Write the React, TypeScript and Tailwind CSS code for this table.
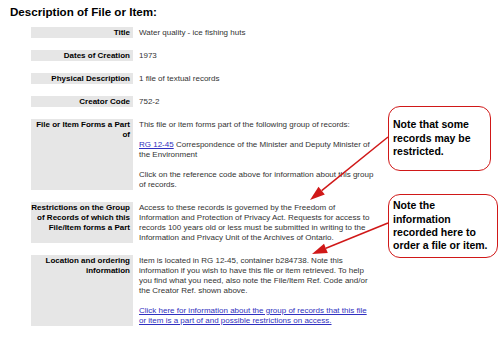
import React from "react";

const Line = ({ children }: { children: React.ReactNode }) => (
  <span className="block whitespace-nowrap">{children}</span>
);

const Label = ({ lines }: { lines: string[] }) => (
  <div className="bg-[#e6e6e6] py-[0.5px] pr-[3px] text-right font-bold text-black">
    {lines.map((l) => (
      <Line key={l}>{l}</Line>
    ))}
  </div>
);

const Link = ({ children }: { children: React.ReactNode }) => (
  <span className="text-[#3030c0] underline">{children}</span>
);

export default function App() {
  return (
    <div className="relative w-[503px] h-[337px] overflow-hidden bg-white font-['Liberation_Sans',Arial,sans-serif]">
      <div className="pl-[10px] pt-[5px]">
        <h1 className="text-[11.6px] leading-[14px] font-bold text-black">
          Description of File or Item:
        </h1>
      </div>
      <div className="ml-[31px] mt-[8px] grid grid-cols-[102px_236px] gap-x-[6px] gap-y-[12px] text-[8px] leading-[10px] text-[#333]">
        <Label lines={["Title"]} />
        <div className="py-[0.5px]">
          <Line>Water quality - ice fishing huts</Line>
        </div>

        <Label lines={["Dates of Creation"]} />
        <div className="py-[0.5px]">
          <Line>1973</Line>
        </div>

        <Label lines={["Physical Description"]} />
        <div className="py-[0.5px]">
          <Line>1 file of textual records</Line>
        </div>

        <Label lines={["Creator Code"]} />
        <div className="py-[0.5px]">
          <Line>752-2</Line>
        </div>

        <Label lines={["File or Item Forms a Part", "of"]} />
        <div className="py-[0.5px] flex flex-col gap-[10px]">
          <div>
            <Line>This file or item forms part of the following group of records:</Line>
          </div>
          <div>
            <Line>
              <Link>RG 12-45</Link> Correspondence of the Minister and Deputy Minister of
            </Line>
            <Line>the Environment</Line>
          </div>
          <div>
            <Line>Click on the reference code above for information about this group</Line>
            <Line>of records.</Line>
          </div>
        </div>

        <Label
          lines={[
            "Restrictions on the Group",
            "of Records of which this",
            "File/Item forms a Part",
          ]}
        />
        <div className="py-[0.5px]">
          <Line>Access to these records is governed by the Freedom of</Line>
          <Line>Information and Protection of Privacy Act. Requests for access to</Line>
          <Line>records 100 years old or less must be submitted in writing to the</Line>
          <Line>Information and Privacy Unit of the Archives of Ontario.</Line>
        </div>

        <Label lines={["Location and ordering", "information"]} />
        <div className="py-[0.5px] flex flex-col gap-[10px]">
          <div>
            <Line>Item is located in RG 12-45, container b284738. Note this</Line>
            <Line>information if you wish to have this file or item retrieved. To help</Line>
            <Line>you find what you need, also note the File/Item Ref. Code and/or</Line>
            <Line>the Creator Ref. shown above.</Line>
          </div>
          <div className="text-[#3030c0] underline">
            <Line>Click here for information about the group of records that this file</Line>
            <Line>or item is a part of and possible restrictions on access.</Line>
          </div>
        </div>
      </div>

      {/* Arrows overlay */}
      <svg
        className="absolute left-0 top-0 pointer-events-none"
        width="503"
        height="337"
        viewBox="0 0 503 337"
      >
        <line x1="388" y1="137" x2="321.7" y2="190.6" stroke="#d01818" strokeWidth="1.5" />
        <polygon points="310,200 324.8,194.5 318.5,186.7" fill="#d01818" />
        <line x1="388" y1="223" x2="325.9" y2="248.3" stroke="#d01818" strokeWidth="1.5" />
        <polygon points="312,254 327.8,252.9 324,243.7" fill="#d01818" />
      </svg>

      {/* Callout 1 */}
      <div className="absolute left-[388px] top-[106px] w-[103px] h-[65px] flex items-center rounded-[12px] border-[1.5px] border-[#d01818] bg-white pl-[4px] text-[10.5px] leading-[13.5px] font-bold text-black">
        <div>
          <Line>Note that some</Line>
          <Line>records may be</Line>
          <Line>restricted.</Line>
        </div>
      </div>

      {/* Callout 2 */}
      <div className="absolute left-[388px] top-[194px] w-[110px] h-[64px] flex items-center rounded-[12px] border-[1.5px] border-[#d01818] bg-white pl-[4px] text-[10.5px] leading-[13.3px] font-bold text-black">
        <div>
          <Line>Note the</Line>
          <Line>information</Line>
          <Line>recorded here to</Line>
          <Line>order a file or item.</Line>
        </div>
      </div>
    </div>
  );
}
